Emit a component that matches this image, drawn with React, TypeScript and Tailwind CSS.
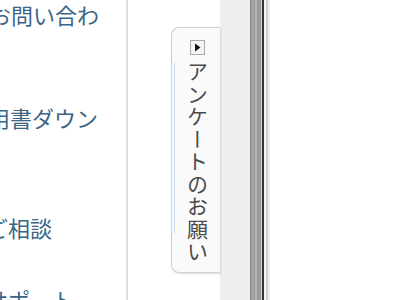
const App = () => {
  return (
    <div className="flex h-[300px] w-[400px] overflow-hidden bg-white font-['Noto_Sans_CJK_JP',sans-serif]">
      {/* left menu, clipped */}
      <div className="w-[128px] shrink-0 overflow-hidden border-r-2 border-[#dcdcdc] bg-white text-[22px] leading-none text-[#3b6586]">
        <div className="ml-[-11px] mt-[3px] whitespace-nowrap">お問い合わ</div>
        <div className="ml-[-12px] mt-[81px] whitespace-nowrap">用書ダウン</div>
        <div className="ml-[-14px] mt-[88px] whitespace-nowrap">ご相談</div>
        <div className="ml-[-14px] mt-[50px] whitespace-nowrap">サポート</div>
      </div>

      {/* tab area */}
      <div className="flex w-[92px] shrink-0 justify-end bg-white pt-[27px]">
        <div className="relative flex h-[246px] w-[49px] flex-col items-center rounded-l-[8px] border border-r-0 border-[#cfcfcf] bg-[#fafafa] shadow-[1px_1px_2px_rgba(0,0,0,0.12)]">
          <div className="absolute left-[2px] top-[35px] h-[170px] w-px bg-[#c8d8f0]" />
          <div className="mt-[12px] ml-[2px] flex h-[15px] w-[15px] items-center justify-center border border-[#aaa] bg-[#f4f4f4]">
            <svg width="7" height="9" viewBox="0 0 7 9">
              <path d="M1 0.5 L6.5 4.5 L1 8.5 Z" fill="#111" />
            </svg>
          </div>
          <div className="mt-[6px] ml-[2px] text-[21px] leading-none tracking-[1.5px] text-[#4a4a4a] [writing-mode:vertical-rl]">
            アンケートのお願い
          </div>
        </div>
      </div>

      {/* gray sidebar */}
      <div className="w-[30px] shrink-0 bg-[#efefef]" />

      {/* frame stripes */}
      <div className="w-px shrink-0 bg-[#888]" />
      <div className="w-[4px] shrink-0 bg-[#a2a2a2]" />
      <div className="w-[2px] shrink-0 bg-[#b4b4b4]" />
      <div className="w-[4px] shrink-0 bg-[#9a9a9a]" />
      <div className="w-px shrink-0 bg-[#d0d0d0]" />
      <div className="w-[2px] shrink-0 bg-[#333]" />
      <div className="w-[2px] shrink-0 bg-[#f4f4f4]" />
      <div className="w-[2px] shrink-0 bg-[#cfcfcf]" />
      <div className="w-[2px] shrink-0 bg-[#ececec]" />

      <div className="flex-1 bg-white" />
    </div>
  );
};

export default App;
